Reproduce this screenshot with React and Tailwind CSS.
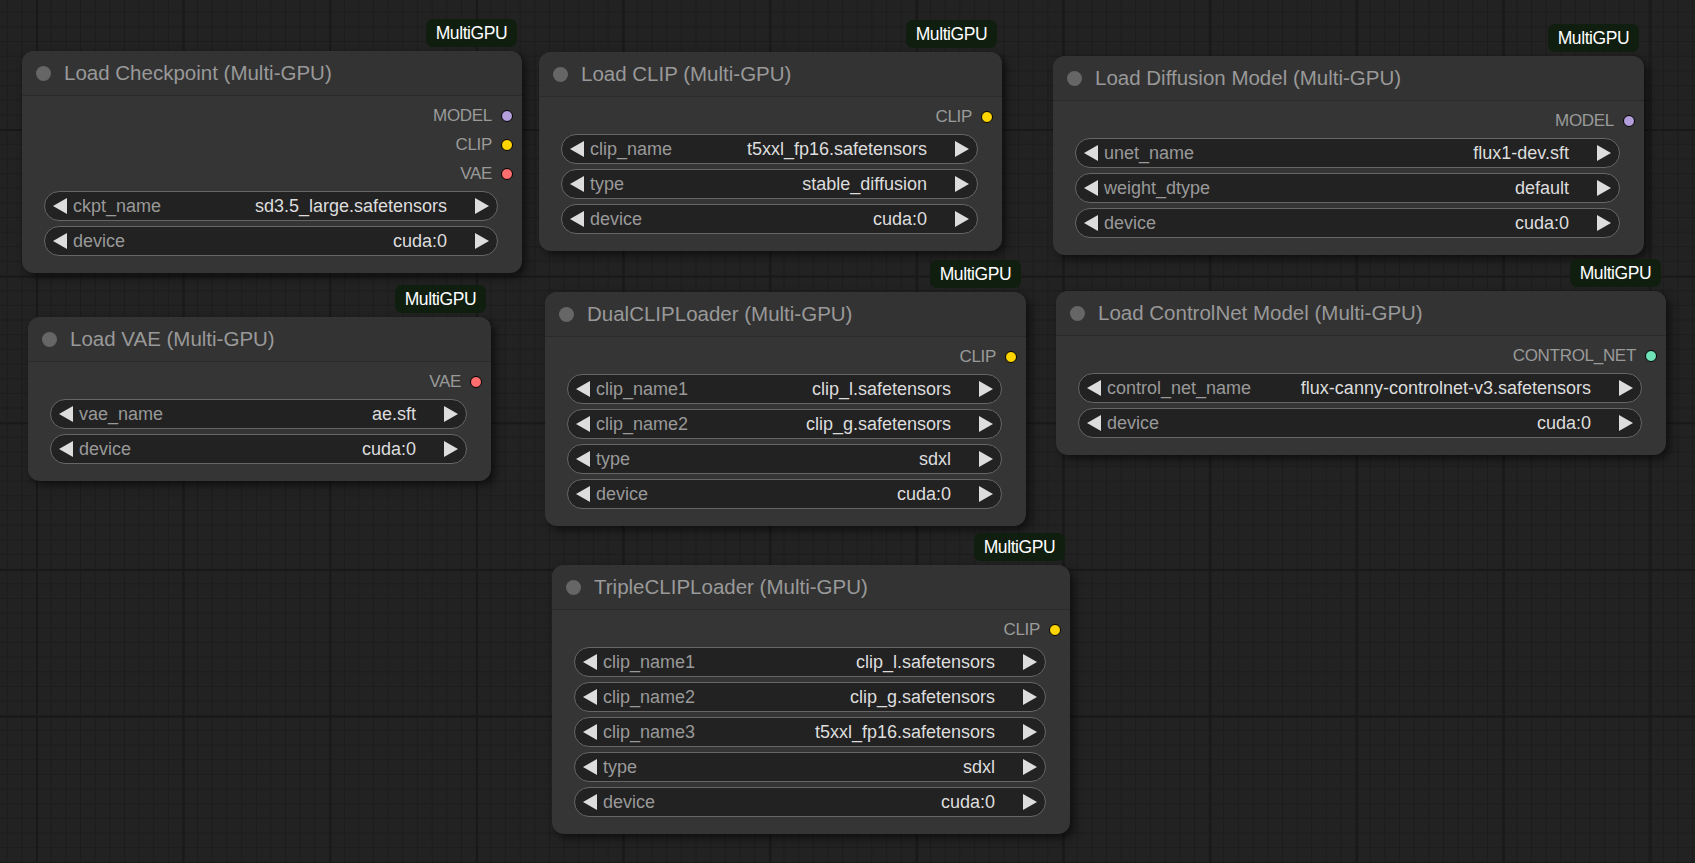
import React from 'react'

const SLOT_COLORS = {
  MODEL: '#b39ddb',
  CLIP: '#ffd500',
  VAE: '#ff6e6e',
  CONTROL_NET: '#6fe3b7',
}

const nodes = [
  {
    title: 'Load Checkpoint (Multi-GPU)',
    x: 22, y: 51, w: 500,
    outputs: ['MODEL', 'CLIP', 'VAE'],
    widgets: [['ckpt_name', 'sd3.5_large.safetensors'], ['device', 'cuda:0']],
  },
  {
    title: 'Load CLIP (Multi-GPU)',
    x: 539, y: 52, w: 463,
    outputs: ['CLIP'],
    widgets: [['clip_name', 't5xxl_fp16.safetensors'], ['type', 'stable_diffusion'], ['device', 'cuda:0']],
  },
  {
    title: 'Load Diffusion Model (Multi-GPU)',
    x: 1053, y: 56, w: 591,
    outputs: ['MODEL'],
    widgets: [['unet_name', 'flux1-dev.sft'], ['weight_dtype', 'default'], ['device', 'cuda:0']],
  },
  {
    title: 'Load VAE (Multi-GPU)',
    x: 28, y: 317, w: 463,
    outputs: ['VAE'],
    widgets: [['vae_name', 'ae.sft'], ['device', 'cuda:0']],
  },
  {
    title: 'DualCLIPLoader (Multi-GPU)',
    x: 545, y: 292, w: 481,
    outputs: ['CLIP'],
    widgets: [
      ['clip_name1', 'clip_l.safetensors'],
      ['clip_name2', 'clip_g.safetensors'],
      ['type', 'sdxl'],
      ['device', 'cuda:0'],
    ],
  },
  {
    title: 'Load ControlNet Model (Multi-GPU)',
    x: 1056, y: 291, w: 610,
    outputs: ['CONTROL_NET'],
    widgets: [['control_net_name', 'flux-canny-controlnet-v3.safetensors'], ['device', 'cuda:0']],
  },
  {
    title: 'TripleCLIPLoader (Multi-GPU)',
    x: 552, y: 565, w: 518,
    outputs: ['CLIP'],
    widgets: [
      ['clip_name1', 'clip_l.safetensors'],
      ['clip_name2', 'clip_g.safetensors'],
      ['clip_name3', 't5xxl_fp16.safetensors'],
      ['type', 'sdxl'],
      ['device', 'cuda:0'],
    ],
  },
]

function Arrow({ dir }) {
  return (
    <svg width="14" height="16" viewBox="0 0 14 16" className="shrink-0">
      {dir === 'left'
        ? <polygon points="14,0 14,16 0,8" fill="#dddddd" />
        : <polygon points="0,0 0,16 14,8" fill="#dddddd" />}
    </svg>
  )
}

function ComboWidget({ label, value }) {
  return (
    <div className="h-[30px] rounded-full border border-[#666] bg-[#222] flex items-center pl-[8px] pr-[8px] text-[18px] leading-none">
      <Arrow dir="left" />
      <span className="ml-[6px] text-[#999] whitespace-nowrap">{label}</span>
      <span className="ml-auto text-[#ddd] whitespace-nowrap">{value}</span>
      <span className="w-[28px]" />
      <Arrow dir="right" />
    </div>
  )
}

function Node({ node }) {
  return (
    <div
      className="absolute rounded-[12px] bg-[#353535] shadow-[4px_4px_8px_rgba(0,0,0,0.55)]"
      style={{ left: node.x, top: node.y, width: node.w }}
    >
      {/* badge sits above the title bar */}
      <div className="absolute -top-[32px] right-[5px] h-[28px] w-[91px] rounded-[7px] bg-[#0f1e0f] flex items-center justify-center text-white text-[17.5px] tracking-[-0.4px]">
        MultiGPU
      </div>

      <div className="h-[45px] flex items-center pl-[14px] rounded-t-[12px] bg-[#333] border-b border-[#2a2a2a]">
        <span className="w-[15px] h-[15px] rounded-full bg-[#666]" />
        <span className="ml-[13px] text-[20.5px] text-[#999] whitespace-nowrap">{node.title}</span>
      </div>

      <div className="pt-[5px] pb-[17px]">
        {node.outputs.map((o) => (
          <div key={o} className="h-[29px] flex items-center justify-end pr-[9px]">
            <span className="text-[17px] text-[#9a9a9a] tracking-[-0.3px]">{o}</span>
            <span
              className="ml-[9px] w-[12px] h-[12px] rounded-full border border-black"
              style={{ backgroundColor: SLOT_COLORS[o] }}
            />
          </div>
        ))}
        <div className="mt-[3px] pl-[22px] pr-[24px] flex flex-col gap-[5px]">
          {node.widgets.map(([l, v]) => (
            <ComboWidget key={l} label={l} value={v} />
          ))}
        </div>
      </div>
    </div>
  )
}

export default function App() {
  return (
    <div
      className="relative w-[1695px] h-[863px] overflow-hidden bg-[#222222] font-['Liberation_Sans',Arial,sans-serif] bg-[linear-gradient(to_right,#191919_2px,transparent_2px),linear-gradient(to_bottom,#191919_2px,transparent_2px),linear-gradient(to_right,#1c1c1c_1px,transparent_1px),linear-gradient(to_bottom,#1c1c1c_1px,transparent_1px)] [background-size:146.7px_146.7px,146.7px_146.7px,14.67px_14.67px,14.67px_14.67px] [background-position:36px_129px]"
    >
      {nodes.map((n) => (
        <Node key={n.title} node={n} />
      ))}
    </div>
  )
}
